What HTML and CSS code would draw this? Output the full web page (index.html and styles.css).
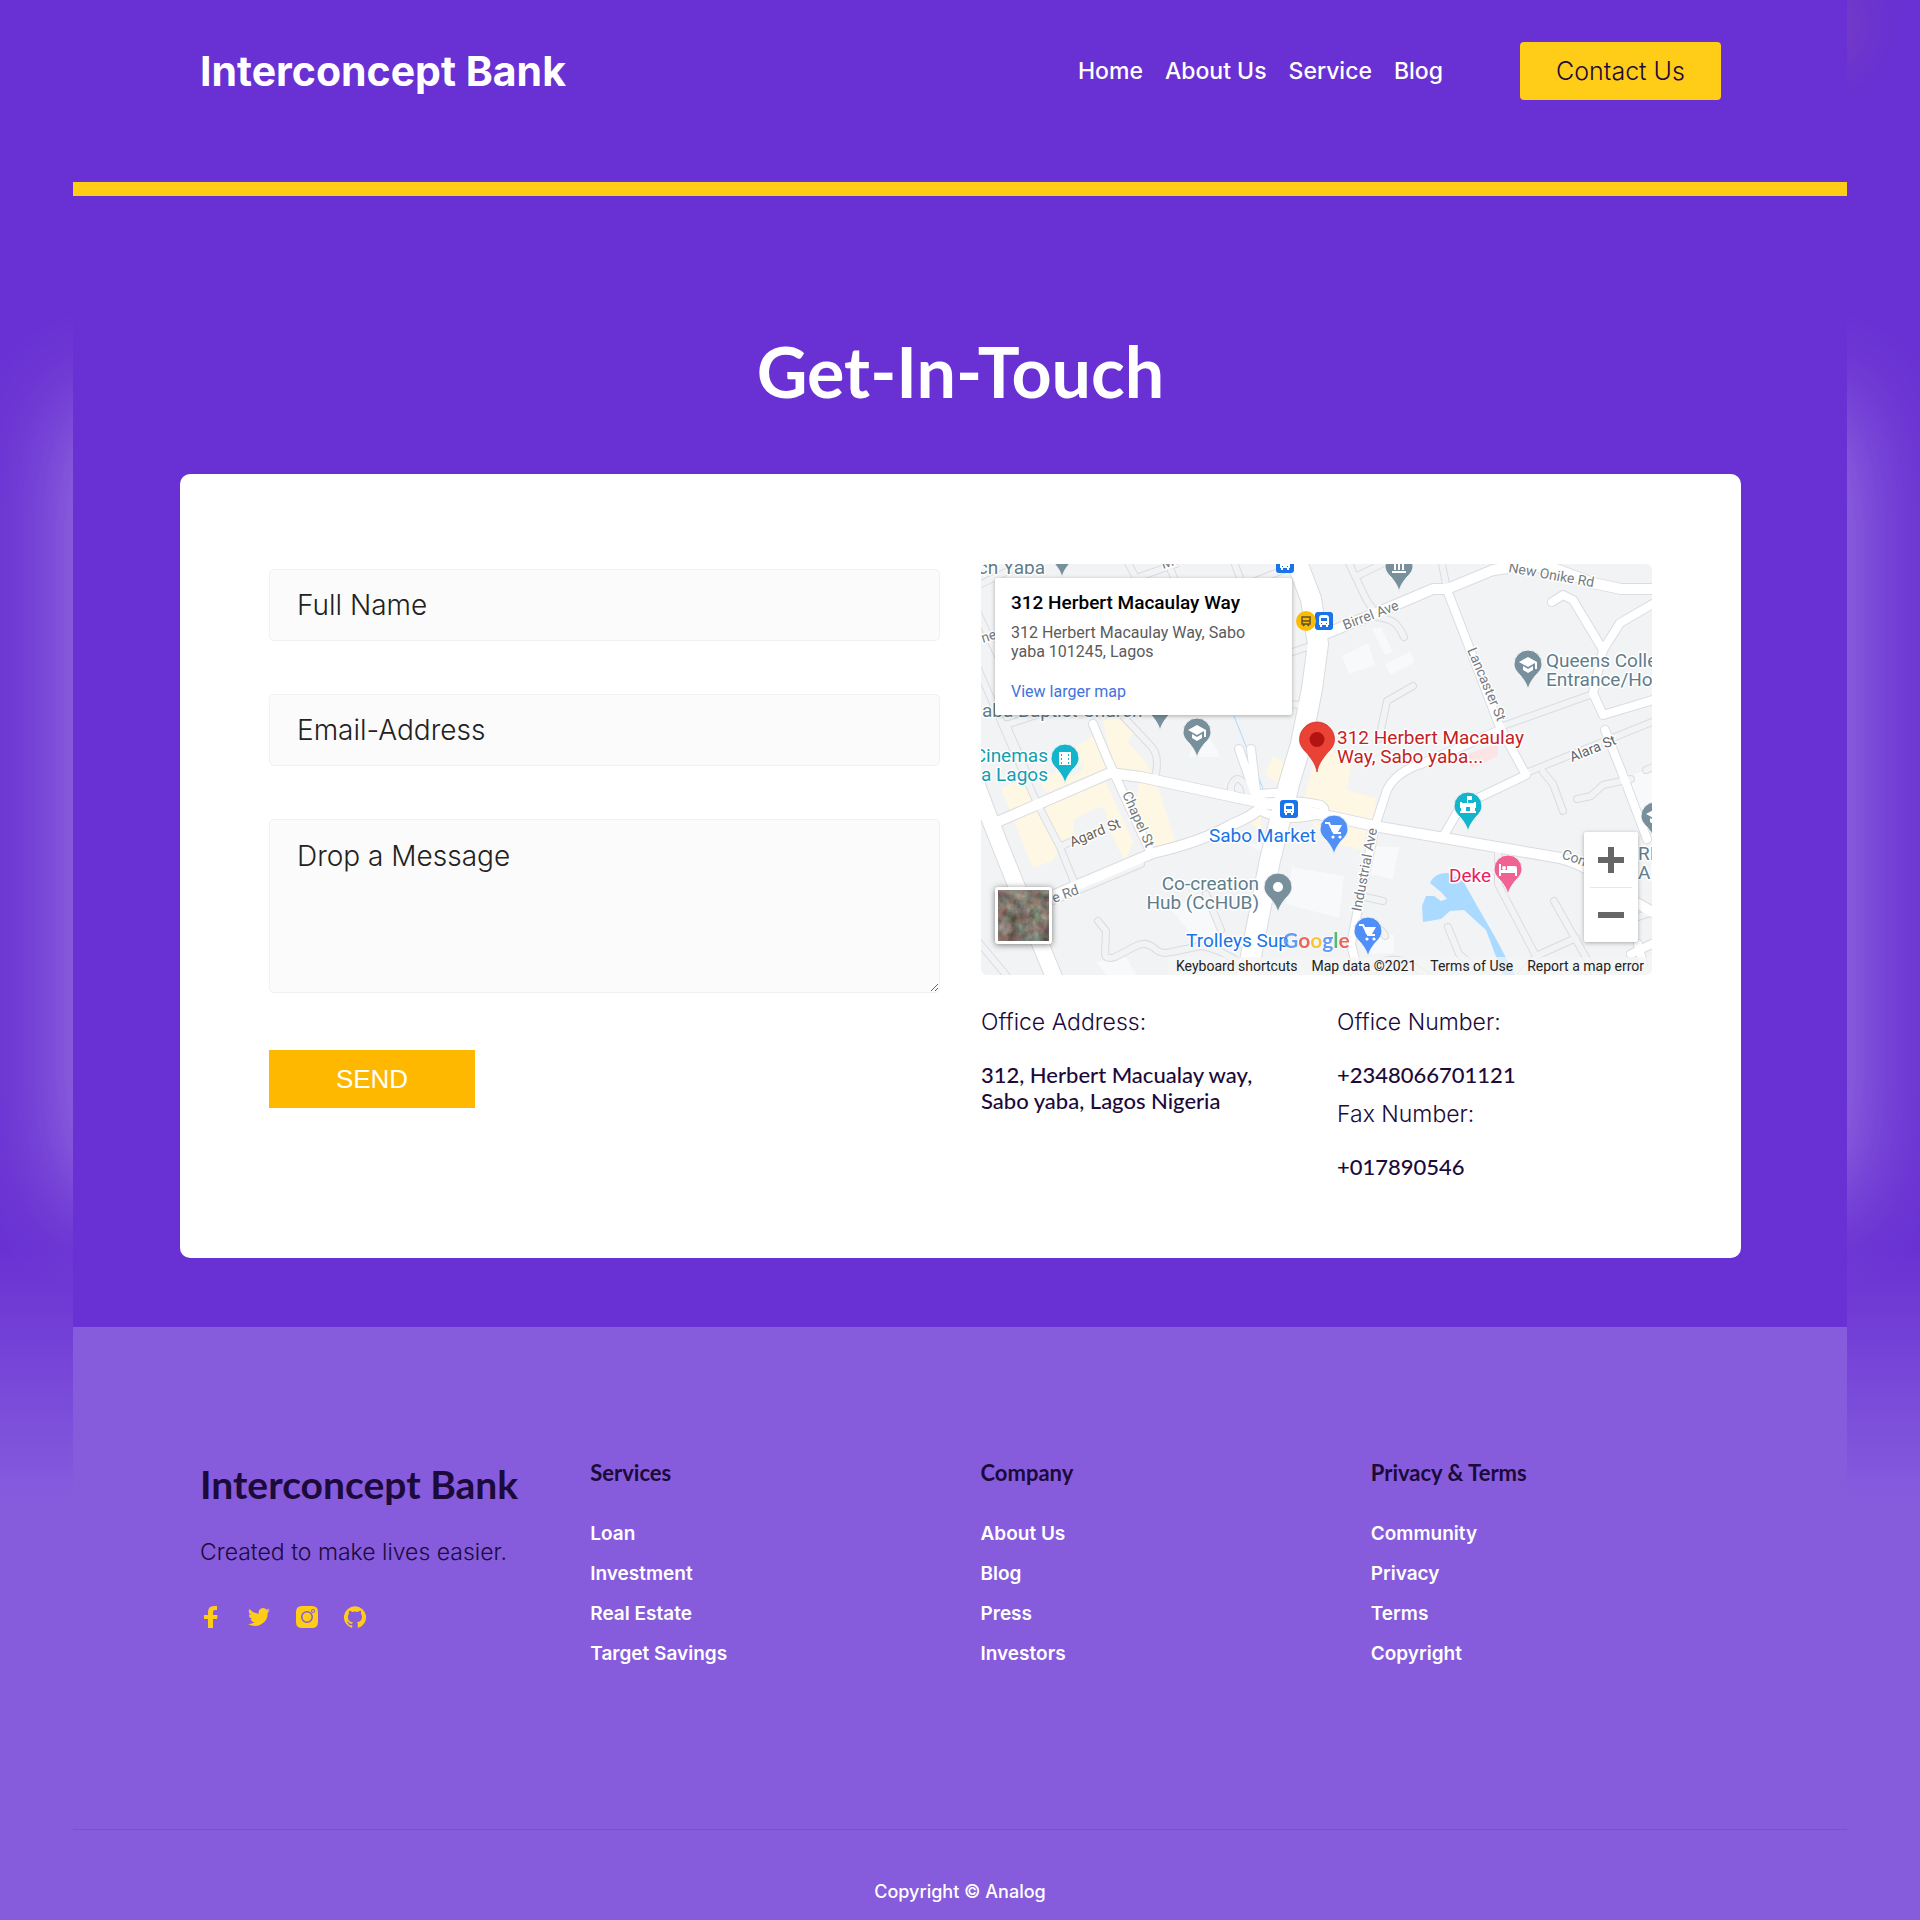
FILE: index.html
```html
<!DOCTYPE html>
<html lang="en">
<head>
<meta charset="utf-8">
<meta name="viewport" content="width=device-width, initial-scale=1">
<title>Interconcept Bank</title>
<link rel="stylesheet" href="styles.css">
</head>
<body>
<div class="page">
  <header class="header">
    <a class="logo" href="#">Interconcept Bank</a>
    <nav class="nav">
      <a href="#">Home</a>
      <a href="#">About Us</a>
      <a href="#">Service</a>
      <a href="#">Blog</a>
    </nav>
    <a class="contact-button" href="#">Contact Us</a>
  </header>

  <main class="contact">
    <h1 class="title">Get-In-Touch</h1>
    <div class="card">
      <form class="form">
        <input class="field" type="text" placeholder="Full Name" aria-label="Full Name">
        <input class="field" type="email" placeholder="Email-Address" aria-label="Email-Address">
        <textarea class="field message" placeholder="Drop a Message" aria-label="Drop a Message"></textarea>
        <button class="send" type="button">SEND</button>
      </form>

      <div class="office">
        <div class="map">
          <svg class="map-canvas" viewBox="0 0 671 411" aria-hidden="true">
            <defs>
              <path id="pin" d="M0 0C-1-6-4-10-8-15C-12-19-14-22-14-26A14 14 0 1 1 14-26C14-22 12-19 8-15C4-10 1-6 0 0z"/>
              <g id="grad"><path fill="#fff" d="M0-32l-9 5 9 5 7-4v6h2v-7zM-5-23v4l5 3 5-3v-4l-5 3z"/></g>
              <g id="cart"><path fill="none" stroke="#fff" stroke-width="2" d="M-9-32h4l5 10h7"/><path fill="#fff" d="M-4-30H8l-4 7h-6z"/><circle cx="-1" cy="-18" r="1.600" fill="#fff"/><circle cx="6" cy="-18" r="1.600" fill="#fff"/></g>
              <g id="bus"><rect x="-9" y="-9" width="18" height="18" rx="3" fill="#1a73e8"/><path fill="#fff" d="M-5-3q0-3 3-3h4q3 0 3 3v7h-1v2h-2v-2h-4v2h-2v-2h-1z"/><path fill="#1a73e8" d="M-3-3h6v3h-6zM-3 2h1v1h-1zM2 2h1v1h-1z"/></g>
              <g id="minor">
                <path d="M72 337L160 300M-5 100L32 185L56 239L79 283L95 323M79 283L91 277M92 319L100 323"/>
                <path d="M0 20L42 0M-5 45L30 120M145-5L155 14L195 0M252-5L262 22L312 2M262 22L285 80"/>
                <path d="M185-5L200 30M366-5L385 35L395 50M376 12L405-2M460-5L466 25"/>
                <path d="M395 53C413 55 417 60 423 73M300 92L329 82M300 140L322 141"/>
                <path d="M432 122L406 137L398 175M519 163L609 131M545 209L671 158"/>
                <path d="M28 160L118 130M139 149L168 180Q180 190 174 214M25 160L45 207"/>
                <path d="M117 357L125 367L124 390Q125 396 134 393L155 382Q165 377 173 384Q180 391 190 388L220 382Q240 385 260 400"/>
                <path d="M225 330L240 366M384 333L402 337M380 368Q400 360 404 372"/>
                <path d="M517 288V320L555 392L595 374M467 363L478 390L490 400M573 337L620 420M555 392L540 411"/>
                <path d="M562 208L572 220L582 247M596 235L610 232L622 221L650 215M665 206L675 202"/>
                <path d="M-5 375L25 411M620 366L680 345M390 411Q400 390 425 398L445 411"/>
                <path d="M250 228V222Q256 208 265 222L268 234"/>
              </g>
              <g id="middle">
                <path d="M112 160L127 196L149 244L170 289M571 38L582 31L592 36L622 86L612 129L622 151L675 135M622 86L639 59L675 38"/>
                <path d="M624 166L640 206L666 275M466 26L519 163L545 211M463 271L480 242L499 233L545 211M394 262L406 226Q415 208 440 200L519 166"/>
                <path d="M394 262L377 345L370 380L374 396M258 185L276 236M280 230Q295 228 310 229M650 390L675 378M657 380L662 400"/>
                <path d="M278 246Q300 258 330 252Q350 248 340 241Q310 234 278 240M270 185L276 236"/>
              </g>
              <g id="major">
                <path d="M16 258L129 209L160 213L272 237L319 246L399 263L579 294Q610 302 640 330L675 350"/>
                <path d="M60 337L92 323L172 289Q220 278 250 261Q272 252 282 242"/>
                <path d="M337 73L419 39L452 25H466L512 6Q545 0 575 5L612 19L640 25H675"/>
              </g>
              <g id="trunk">
                <path d="M-12 200L9 256L29 306L75 418" stroke-width="16"/>
                <path d="M312-12L330 35L337 80L331 125L320 180L308 220L289 296L270 392L264 420" stroke-width="20"/>
              </g>
            </defs>
            <rect width="671" height="411" fill="#f1f3f4"/>
            <path fill="#f8f9fa" d="M361 92L387 79L394 101L368 110zM391 65L400 63L412 88L404 91zM404 100L429 88L434 98L409 111zM265 280H300V300L275 285zM311 303L363 312L358 354L305 340zM385 282L418 283L412 315L382 309zM190 345L220 330L245 371L214 375zM385 368L413 371V389L390 390zM635 215L671 205V270zM115 398L145 393L155 411H125zM220 160L240 193H208z"/>
            <path fill="#fef7e3" d="M122 157L139 149L155 165L147 178L165 198L171 210L131 204zM94 183L112 172L127 204L64 229L58 215L88 202L90 214L102 205zM64 242L124 216L152 278L144 298L128 265L124 245L117 243L92 256L94 273L77 277zM158 217L176 220L195 280L173 284L154 244zM20 225L48 211L79 286L71 297L52 304zM292 192L303 198L298 220L284 210zM338 183L371 196L366 226L395 234L393 258L320 244L330 210zM330 258L386 264L381 286L348 279zM270 260L280 250V266z"/>
            <path fill="#fce4e4" d="M486 190L517 180V192L491 204z"/>
            <path fill="#aadaff" d="M449 319Q454 308 467 309L482 317L495 340L514 373L534 411H522L505 366L483 346L469 347L460 355L442 358L441 342L445 332H453L460 337L466 335L460 328z"/>
            <path fill="none" stroke="#aadaff" stroke-width="1" d="M253 152L283 227"/>
            <g fill="none" stroke="#dadce0" stroke-linejoin="round" stroke-linecap="round">
              <use href="#minor" stroke-width="8"/><use href="#middle" stroke-width="10"/><use href="#major" stroke-width="12"/>
              <path d="M-12 200L9 256L29 306L75 418" stroke-width="18"/><path d="M312-12L330 35L337 80L331 125L320 180L308 220L289 296L270 392L264 420" stroke-width="22"/>
            </g>
            <g fill="none" stroke-linejoin="round" stroke-linecap="round">
              <use href="#minor" stroke="#f1f3f4" stroke-width="6"/>
              <g stroke="#fff"><use href="#middle" stroke-width="8"/><use href="#major" stroke-width="10"/><use href="#trunk"/></g>
            </g>
            <g class="street">
              <text transform="translate(364 66) rotate(-21)">Birrel Ave</text>
              <text transform="translate(527 8) rotate(10)">New Onike Rd</text>
              <text transform="translate(486 86) rotate(67)">Lancaster St</text>
              <text transform="translate(591 198) rotate(-22)" fill="#5f6368">Alara St</text>
              <text transform="translate(141 230) rotate(66)">Chapel St</text>
              <text transform="translate(91 283) rotate(-22)" fill="#665f55">Agard St</text>
              <text transform="translate(73 339) rotate(-20)">e Rd</text>
              <text transform="translate(380 348) rotate(-79)">Industrial Ave</text>
              <text transform="translate(580 294) rotate(20)">Com</text>
              <text transform="translate(2 79) rotate(-18)">ne</text>
              <text transform="translate(182 5) rotate(-18)">Mo</text>
            </g>
            <g class="place">
              <text x="64" y="10" text-anchor="end">ch Yaba</text>
              <text x="1" y="153">aba Baptist Church</text>
              <text x="565" y="103">Queens College</text>
              <text x="565" y="122">Entrance/House</text>
              <text x="278" y="326" text-anchor="end">Co-creation</text>
              <text x="278" y="345" text-anchor="end">Hub (CcHUB)</text>
              <text x="657" y="296">RI</text><text x="657" y="315">AI</text>
              <g fill="#129eaf"><text x="67" y="198" text-anchor="end">Cinemas</text><text x="67" y="217" text-anchor="end">a Lagos</text></g>
              <g fill="#1a73e8"><text x="228" y="278">Sabo Market</text><text x="205" y="383">Trolleys Sup</text></g>
              <text x="510" y="318" text-anchor="end" fill="#e91e63">Deke</text>
              <g fill="#c5221f"><text x="356" y="180">312 Herbert Macaulay</text><text x="356" y="199">Way, Sabo yaba...</text></g>
            </g>
            <g fill="#78909c" stroke="#f1f3f4" stroke-width="1">
              <use href="#pin" x="418" y="28"/><use href="#pin" x="547" y="126"/><use href="#pin" x="216" y="194"/><use href="#pin" x="179" y="167"/><use href="#pin" x="81" y="14"/><use href="#pin" x="297" y="349"/><use href="#pin" x="674" y="278"/>
              <g fill="#12b5cb"><use href="#pin" x="84" y="220"/><use href="#pin" x="487" y="268"/></g>
              <g fill="#4f8ff7"><use href="#pin" x="353" y="291"/><use href="#pin" x="387" y="393"/></g>
              <use href="#pin" x="527" y="331" fill="#f06292"/>
            </g>
            <use href="#grad" x="547" y="125"/><use href="#grad" x="216" y="193"/><use href="#grad" x="674" y="277"/>
            <use href="#cart" x="353" y="291"/><use href="#cart" x="387" y="393"/>
            <circle cx="297" cy="323" r="5" fill="#fff"/>
            <path fill="#fff" d="M411 7h14v2h-14zM413 0h2v6h-2zM417 0h2v6h-2zM421 0h2v6h-2z"/>
            <path fill="#fff" fill-rule="evenodd" d="M78 188h12v13H78zM80 190v2h1v-2zm0 4v2h1v-2zm0 4v2h1v-2zm7-8v2h1v-2zm0 4v2h1v-2zm0 4v2h1v-2z"/>
            <path fill="#fff" fill-rule="evenodd" d="M486 232h5v4h-4v3h6v-1h2v6h-1v3h1v2h-16v-2h1v-3h-1v-6h2v1h5zM485 243v4h4v-4z"/>
            <path fill="#fff" d="M518 300h2v6h6v-4h8q2 0 2 2v8h-2v-3h-14v3h-2z"/><circle cx="523" cy="304" r="2" fill="#fff"/>
            <g transform="translate(336 208) scale(1.250)"><use href="#pin" fill="#ea4335" stroke="#c5221f" stroke-width=".5"/><circle cy="-26" r="6" fill="#b31412"/></g>
            <use href="#bus" x="304" y="0"/><use href="#bus" x="343" y="57"/><use href="#bus" x="308" y="245"/>
            <circle cx="325" cy="57" r="10" fill="#fbbc04"/><path fill="none" stroke="#5f5030" stroke-width="1.500" d="M321 53h8v7h-8zM321 57h8M322 62l2-2m4 2l-2-2"/>
            <text class="google" x="302" y="384"><tspan fill="#4285f4">G</tspan><tspan fill="#ea4335">o</tspan><tspan fill="#fbbc04">o</tspan><tspan fill="#4285f4">g</tspan><tspan fill="#34a853">l</tspan><tspan fill="#ea4335">e</tspan></text>
          </svg>
          <div class="place-card">
            <h2>312 Herbert Macaulay Way</h2>
            <p>312 Herbert Macaulay Way, Sabo yaba 101245, Lagos</p>
            <a href="#">View larger map</a>
          </div>
          <button class="satellite" type="button" aria-label="Satellite view">
            <svg viewBox="0 0 52 52" aria-hidden="true">
              <filter id="terrain" x="0" y="0" width="1" height="1" color-interpolation-filters="sRGB"><feTurbulence type="fractalNoise" baseFrequency=".09" numOctaves="5" seed="7"/><feColorMatrix values=".5 .3 0 0 .09 .2 .5 0 0 .11 .2 .4 .1 0 .07 0 0 0 0 1"/></filter>
              <rect width="52" height="52" filter="url(#terrain)"/>
            </svg>
          </button>
          <div class="zoom">
            <button type="button" aria-label="Zoom in"><svg viewBox="0 0 26 26"><path d="M10 0h6v10h10v6H16v10h-6V16H0v-6h10z"/></svg></button>
            <button type="button" aria-label="Zoom out"><svg viewBox="0 0 26 26"><path d="M0 10h26v6H0z"/></svg></button>
          </div>
          <div class="attribution">
            <a href="#">Keyboard shortcuts</a><span>Map data ©2021</span><a href="#">Terms of Use</a><a href="#">Report a map error</a>
          </div>
        </div>

        <div class="details">
          <dl>
            <dt>Office Address:</dt>
            <dd>312, Herbert Macualay way,<br>Sabo yaba, Lagos Nigeria</dd>
          </dl>
          <dl>
            <dt>Office Number:</dt>
            <dd>+2348066701121</dd>
            <dt>Fax Number:</dt>
            <dd>+017890546</dd>
          </dl>
        </div>
      </div>
    </div>
  </main>

  <footer class="footer">
    <div class="footer-columns">
      <div>
        <h2 class="footer-brand">Interconcept Bank</h2>
        <p class="tagline">Created to make lives easier.</p>
        <div class="social">
          <a href="#" aria-label="Facebook"><svg viewBox="0 0 22 22"><path d="M8 22V13H4V9h4V6q0-6 6-6h3v4h-2q-2 0-2 2v3h4.500l-.5 4h-4v9z"/></svg></a>
          <a href="#" aria-label="Twitter"><svg viewBox="0 0 24 24"><path d="M24 4.600a10 10 0 0 1-2.800.8 5 5 0 0 0 2.100-2.700 10 10 0 0 1-3.100 1.200 4.900 4.900 0 0 0-8.400 4.500A14 14 0 0 1 1.700 3.200a4.900 4.900 0 0 0 1.500 6.500 5 5 0 0 1-2.200-.6 4.900 4.900 0 0 0 3.900 4.900 5 5 0 0 1-2.200.1 4.900 4.900 0 0 0 4.600 3.400A10 10 0 0 1 0 19.500 14 14 0 0 0 21.500 7.100 10 10 0 0 0 24 4.600z"/></svg></a>
          <a href="#" aria-label="Instagram"><svg viewBox="0 0 22 22"><path fill-rule="evenodd" d="M6 0h10q6 0 6 6v10q0 6-6 6H6q-6 0-6-6V6q0-6 6-6zM11 5a6 6 0 1 0 0 12 6 6 0 0 0 0-12zm0 1.500a4.500 4.500 0 1 1 0 9 4.500 4.500 0 0 1 0-9zM17 3a2 2 0 1 0 0 4 2 2 0 0 0 0-4zm0 1a1 1 0 1 1 0 2 1 1 0 0 1 0-2z"/></svg></a>
          <a href="#" aria-label="GitHub"><svg viewBox="0 0 24 24"><path d="M12 .3a12 12 0 0 0-3.800 23.400c.6.1.8-.3.8-.6v-2.200c-3.300.7-4-1.400-4-1.400-.6-1.400-1.400-1.800-1.400-1.800-1-.7.1-.7.1-.7 1.200 0 1.900 1.200 1.900 1.200 1 1.800 2.800 1.300 3.500 1 0-.8.400-1.300.7-1.600-2.700-.3-5.500-1.300-5.500-6 0-1.200.5-2.300 1.300-3.100-.2-.4-.6-1.600 0-3.200 0 0 1-.3 3.400 1.200a11.500 11.500 0 0 1 6 0c2.300-1.500 3.300-1.200 3.300-1.200.6 1.600.2 2.800 0 3.200.9.800 1.300 1.900 1.300 3.200 0 4.600-2.800 5.600-5.500 5.900.5.400.9 1 .9 2.200v3.300c0 .3.100.7.8.6A12 12 0 0 0 12 .3"/></svg></a>
        </div>
      </div>
      <nav class="footer-links">
        <h3>Services</h3>
        <a href="#">Loan</a><a href="#">Investment</a><a href="#">Real Estate</a><a href="#">Target Savings</a>
      </nav>
      <nav class="footer-links">
        <h3>Company</h3>
        <a href="#">About Us</a><a href="#">Blog</a><a href="#">Press</a><a href="#">Investors</a>
      </nav>
      <nav class="footer-links">
        <h3>Privacy &amp; Terms</h3>
        <a href="#">Community</a><a href="#">Privacy</a><a href="#">Terms</a><a href="#">Copyright</a>
      </nav>
    </div>
    <p class="copyright">Copyright © Analog</p>
  </footer>
</div>
</body>
</html>
```
FILE: styles.css
```css
:root {
  --purple: #6931d3;
  --lilac: #865cdd;
  --yellow: #ffcc18;
  --ink: #1b0a3a;
  --body-font: Inter, "Open Sans", sans-serif;
  --display-font: Lato, "Open Sans", sans-serif;
}

* { box-sizing: border-box; margin: 0; padding: 0; }

html { background: var(--lilac); }

body {
  font-family: var(--body-font);
  background: linear-gradient(to bottom, var(--purple) 65%, var(--lilac) 78%);
}

a { color: inherit; text-decoration: none; }
button { border: 0; font: inherit; cursor: pointer; }

.page { isolation: isolate; margin: 0 73px; }

/* Header */
.header {
  position: relative;
  display: flex;
  align-items: center;
  height: 196px;
  padding: 0 126px 40px 127px;
  color: #fff;
  background: var(--purple);
  border-bottom: 14px solid var(--yellow);
}
.header::before {
  content: "";
  position: absolute;
  z-index: -1;
  inset: 0 0 130px 60%;
  box-shadow: 0 0 60px rgba(255, 204, 24, .2);
}
.logo { margin-right: auto; font-size: 41px; line-height: 48px; font-weight: 700; }
.nav { display: flex; gap: 22px; font-size: 23px; line-height: 28px; font-weight: 500; }
.contact-button {
  width: 201px;
  margin-left: 77px;
  border-radius: 4px;
  background: var(--yellow);
  color: var(--ink);
  font-size: 25px;
  line-height: 58px;
  font-weight: 300;
  text-align: center;
}

/* Contact section */
.contact { position: relative; padding: 130px 106px 69px 107px; background: var(--purple); }
.contact::before {
  content: "";
  position: absolute;
  z-index: -1;
  inset: 210px 0 130px;
  box-shadow: 0 0 100px rgba(255, 255, 255, .4);
}
.title {
  margin-bottom: 58px;
  color: #fff;
  font: 700 70px/90px var(--display-font);
  text-align: center;
}
.card {
  display: grid;
  grid-template-columns: 1fr 1fr;
  gap: 41px;
  padding: 90px 89px 78px;
  border-radius: 10px;
  background: #fff;
}

/* Form */
.form { display: flex; flex-direction: column; align-items: flex-start; padding-top: 5px; }
.field {
  width: 100%;
  height: 72px;
  margin-bottom: 53px;
  padding: 0 27px;
  border: 1px solid #f1f1f1;
  border-radius: 5px;
  background: #fbfbfb;
  color: #222;
  font: 300 28px/32px var(--body-font);
}
.field::placeholder { color: #222; opacity: 1; }
.message { height: 174px; margin: 0 0 57px; padding-top: 20px; resize: vertical; }
.send {
  width: 206px;
  background: #ffb800;
  color: #fff;
  font: 400 26px/58px "Liberation Sans", Arial, sans-serif;
}

/* Map */
.map {
  position: relative;
  overflow: hidden;
  border-radius: 6px;
  font-family: Roboto, sans-serif;
}
.map-canvas { display: block; width: 100%; }
.street { fill: #757b80; font-size: 14px; }
.place { fill: #607d8b; font-size: 19px; }
.street text, .place text { stroke: #fff; stroke-width: 3px; stroke-linejoin: round; paint-order: stroke; }
.google { font: 700 21px Lato, sans-serif; opacity: .8; stroke: #fff; stroke-width: 1px; paint-order: stroke; }
.place-card {
  position: absolute;
  top: 14px;
  left: 14px;
  width: 297px;
  padding: 14px 16px;
  border-radius: 2px;
  background: #fff;
  box-shadow: 0 1px 4px rgba(0, 0, 0, .3);
  color: #5b5b5b;
  font-size: 16px;
  line-height: 19px;
}
.place-card h2 { margin-bottom: 9px; color: #000; font-size: 19px; line-height: 22px; font-weight: 500; }
.place-card p { margin-bottom: 21px; }
.place-card a { display: block; color: #4272db; }
.satellite {
  position: absolute;
  left: 14px;
  bottom: 31px;
  width: 57px;
  height: 57px;
  border: 3px solid #fff;
  border-radius: 3px;
  box-shadow: 0 1px 6px rgba(0, 0, 0, .5);
}
.satellite svg { display: block; width: 100%; }
.zoom {
  position: absolute;
  right: 14px;
  bottom: 33px;
  width: 54px;
  padding: 0 6px;
  border-radius: 2px;
  background: #fff;
  box-shadow: 0 1px 4px rgba(0, 0, 0, .3);
}
.zoom button { display: grid; place-items: center; width: 100%; height: 55px; background: none; }
.zoom button + button { border-top: 1px solid #e6e6e6; }
.zoom svg { width: 26px; fill: #666; }
.attribution {
  position: absolute;
  right: 0;
  bottom: 0;
  display: flex;
  gap: 14px;
  padding: 0 8px;
  background: rgba(245, 245, 245, .7);
  color: #222;
  font-size: 14px;
  line-height: 18px;
}

/* Office details */
.details {
  display: grid;
  grid-template-columns: 1fr 1fr;
  gap: 41px;
  margin-top: 34px;
  color: var(--ink);
  font-size: 23px;
  line-height: 26px;
  white-space: nowrap;
}
.details dt { margin-bottom: 27px; font-weight: 300; }
.details dd { margin-bottom: 13px; font-family: var(--display-font); font-size: 22px; font-weight: 500; }
.details dd:last-child { margin-bottom: 0; }

/* Footer */
.footer { background: var(--lilac); color: #fff; }
.footer-columns {
  display: grid;
  grid-template-columns: repeat(4, 1fr);
  gap: 41px;
  padding: 133px 127px 165px;
  border-bottom: 1px solid #7a50cd;
}
.footer-brand { margin-bottom: 31px; color: var(--ink); font: 700 39px/48px var(--display-font); white-space: nowrap; }
.tagline { margin-bottom: 41px; color: var(--ink); font-size: 23px; line-height: 26px; font-weight: 300; white-space: nowrap; }
.social { display: flex; gap: 26px; }
.social svg { display: block; width: 22px; height: 22px; fill: var(--yellow); }
.footer-links { display: flex; flex-direction: column; align-items: flex-start; gap: 20px; font-size: 19px; line-height: 20px; font-weight: 600; }
.footer-links h3 { margin-bottom: 18px; color: var(--ink); font: 700 22px/26px var(--display-font); }
.copyright { padding: 52px 0 18px; font-size: 18px; line-height: 20px; font-weight: 500; text-align: center; }
```
